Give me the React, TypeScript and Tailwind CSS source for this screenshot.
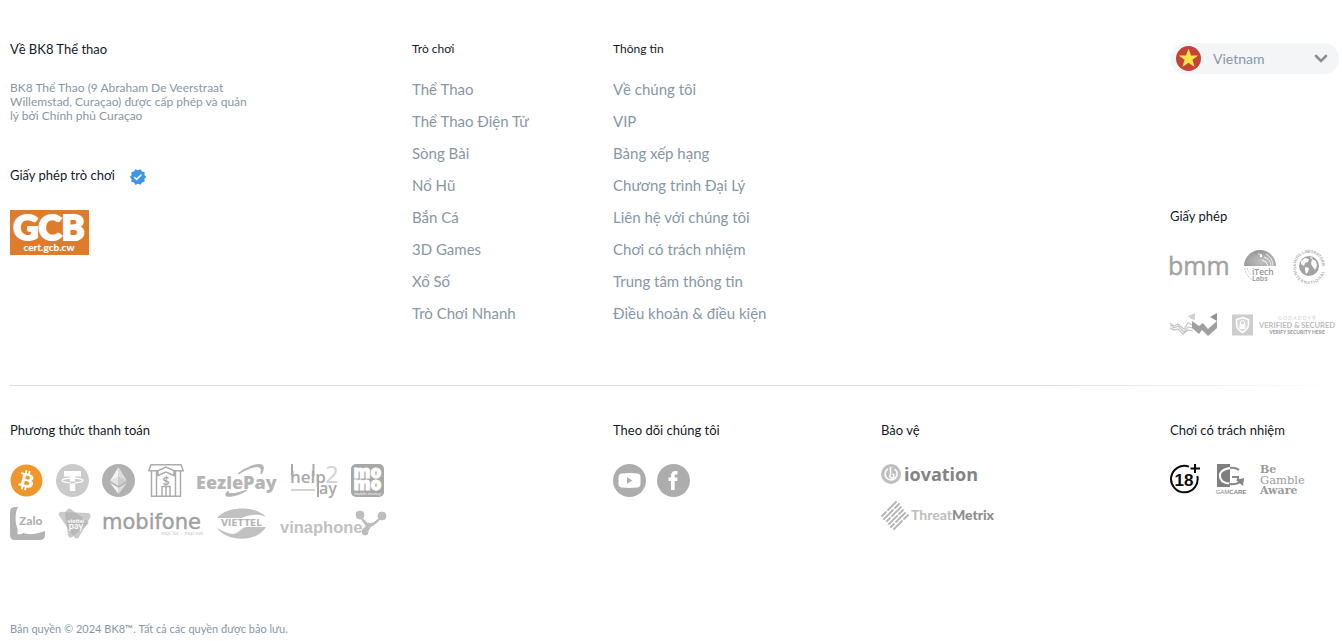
import { ReactNode } from "react";
import { FaBitcoin } from "react-icons/fa";
import { MdVerified } from "react-icons/md";

const games = [
  "Thể Thao",
  "Thể Thao Điện Tử",
  "Sòng Bài",
  "Nổ Hũ",
  "Bắn Cá",
  "3D Games",
  "Xổ Số",
  "Trò Chơi Nhanh",
];

const info = [
  "Về chúng tôi",
  "VIP",
  "Bảng xếp hạng",
  "Chương trình Đại Lý",
  "Liên hệ với chúng tôi",
  "Chơi có trách nhiệm",
  "Trung tâm thông tin",
  "Điều khoản & điều kiện",
];

export default function App() {
  return (
    <footer className="bg-white pt-10 pl-2.5 font-['Lato','Open_Sans',sans-serif] text-[#8798a5]">
      <div className="grid grid-cols-[402fr_201fr_557fr_172fr]">
        <About />
        <LinkColumn title="Trò chơi" links={games} />
        <LinkColumn title="Thông tin" links={info} />
        <div>
          <LanguageSelect />
          <div className="mt-[133px]">
            <Heading>Giấy phép</Heading>
          </div>
          <Licences />
        </div>
      </div>

      <hr className="mt-12 h-px border-0 bg-linear-to-r from-[#dcdcdc] from-75% to-white" />

      <div className="mt-[35px] grid grid-cols-[603fr_268fr_289fr_172fr]">
        <div>
          <Heading>Phương thức thanh toán</Heading>
          <Payments />
        </div>
        <div>
          <Heading>Theo dõi chúng tôi</Heading>
          <div className="mt-[25px] flex gap-[11px]">
            <a href="#youtube" aria-label="YouTube">
              <YoutubeIcon />
            </a>
            <a href="#facebook" aria-label="Facebook">
              <FacebookIcon />
            </a>
          </div>
        </div>
        <div>
          <Heading>Bảo vệ</Heading>
          <div className="mt-[25px] flex flex-col gap-4">
            <Iovation />
            <ThreatMetrix />
          </div>
        </div>
        <div>
          <Heading>Chơi có trách nhiệm</Heading>
          <div className="mt-6 flex gap-4">
            <Eighteen />
            <GamCare />
            <GambleAware />
          </div>
        </div>
      </div>

      <p className="mt-[79px] text-[11px] leading-5">
        Bản quyền © 2024 BK8™. Tất cả các quyền được bảo lưu.
      </p>
    </footer>
  );
}

function Heading({ children }: { children: ReactNode }) {
  return <h2 className="text-[13px] leading-[18px] text-[#131a28]">{children}</h2>;
}

function About() {
  return (
    <div>
      <Heading>Về BK8 Thể thao</Heading>
      <p className="mt-[23px] max-w-[246px] text-xs leading-[14px]">
        BK8 Thể Thao (9 Abraham De Veerstraat Willemstad, Curaçao) được cấp phép
        và quản lý bởi Chính phủ Curaçao
      </p>
      <div className="mt-[43px] flex gap-3.5">
        <Heading>Giấy phép trò chơi</Heading>
        <MdVerified size={18} className="mt-0.5 text-[#3c95e8]" />
      </div>
      <svg width="79" height="45" className="mt-6 overflow-visible">
        <rect width="79" height="45" fill="#de7c2b" />
        <g fill="#fff" textAnchor="middle" fontWeight="900">
          <text x="39" y="30" fontSize="35" stroke="#fff" strokeWidth="2">
            GCB
          </text>
          <text x="39" y="41" fontSize="10">
            cert.gcb.cw
          </text>
        </g>
      </svg>
    </div>
  );
}

function LinkColumn({ title, links }: { title: string; links: string[] }) {
  return (
    <div>
      <h2 className="text-xs leading-[18px] text-[#131a28]">{title}</h2>
      <ul className="mt-[15px]">
        {links.map((link) => (
          <li key={link} className="text-[15px] leading-8">
            <a href="#">{link}</a>
          </li>
        ))}
      </ul>
    </div>
  );
}

function LanguageSelect() {
  return (
    <div className="relative mt-[3px] mr-[3px] flex h-[31px] items-center rounded-full bg-[#f3f5f7]">
      <svg width="25" height="25" viewBox="0 0 25 25" className="absolute left-1.5">
        <circle cx="12.5" cy="12.5" r="12.5" fill="#c44336" />
        <path
          d="M12.5 2.500 15 9.400h7.300l-5.800 4.400 2.100 7.200-6.100-4.300L6.400 21l2.100-7.200L2.700 9.400H10z"
          fill="#f9e34c"
        />
      </svg>
      <select
        aria-label="Quốc gia"
        className="h-full w-full appearance-none bg-transparent pl-[43px] text-sm outline-none"
      >
        <option>Vietnam</option>
      </select>
      <svg
        width="14"
        height="10"
        className="pointer-events-none absolute right-[11px]"
        fill="none"
        stroke="#8e8e8e"
        strokeWidth="2.600"
      >
        <path d="M2 2l5 5 5-5" strokeLinecap="round" />
      </svg>
    </div>
  );
}

function Licences() {
  return (
    <>
      <div className="mt-[23px] flex h-[35px] items-center gap-4">
        <svg
          width="58"
          height="20"
          aria-label="bmm"
          role="img"
          className="overflow-visible"
        >
          <text
            x="-2"
            y="19"
            fontSize="25"
            fill="#a3a3a3"
            stroke="#a3a3a3"
            strokeWidth="0.500"
            className="font-['Open_Sans']"
          >
            bmm
          </text>
        </svg>
        <ITechLabs />
        <Gli />
      </div>
      <div className="mt-[30px] flex items-center gap-[15px]">
        <svg width="47" height="24" viewBox="0 0 47 24">
          <path
            d="M0 10l4 3 4-2 6 5 4-6 4 2M0 12l4 3 4-2 6 6 4-5 5 1M0 15l4 2 4-1 5 5 5-4 5 1"
            fill="none"
            stroke="#c6c6c6"
            strokeWidth="1.200"
          />
          <path d="M22 8l7 5 4-3 5 6 9-8v7l-9 8-6-6-3 4-7-6z" fill="#a0a0a0" />
          <path d="M18 3l7-3v7l-4-1z" fill="#d3d3d3" />
          <path d="M40 4l7-4v8z" fill="#929292" />
        </svg>
        <svg width="104" height="22" viewBox="0 0 104 22">
          <rect width="21" height="21" y="0.500" fill="#cdcdcd" />
          <path
            d="M10.500 3.500l6 2v5c0 4-2.500 6-6 8-3.500-2-6-4-6-8v-5z"
            fill="#d7d7d7"
            stroke="#fff"
            strokeWidth="1.500"
          />
          <rect x="7.500" y="10" width="6" height="5" rx="1" fill="#fff" />
          <path d="M8.500 10V8.500a2 2 0 0 1 4 0V10" fill="none" stroke="#fff" />
          <g textAnchor="middle">
            <text x="65" y="6" fontSize="5" fill="#cfcfcf">
              G O D A D D Y ®
            </text>
            <text x="65" y="14" fontSize="7.500" fontWeight="700" fill="#bcbcbc">
              VERIFIED &amp; SECURED
            </text>
            <text x="65" y="20" fontSize="5" fontWeight="900" fill="#9f9f9f">
              VERIFY SECURITY HERE
            </text>
          </g>
        </svg>
      </div>
    </>
  );
}

function ITechLabs() {
  return (
    <svg width="32" height="32" viewBox="0 0 32 32" className="overflow-visible">
      <defs>
        <radialGradient id="dome" cx="0.600" cy="0.700" r="0.800">
          <stop offset="0" stopColor="#c4c4c4" />
          <stop offset="1" stopColor="#8f8f8f" />
        </radialGradient>
      </defs>
      <path d="M0 16a16 16 0 0 1 32 0z" fill="url(#dome)" />
      <g fill="none" stroke="#fff">
        <path d="M18 10q5 1 6 6M20 7q7 2 7 9M22 4q7 4 7 12" strokeWidth="0.800" />
        <path d="M14 4l4 1" strokeWidth="0.800" />
      </g>
      <circle cx="17" cy="6" r="1.200" fill="#fff" />
      <path
        d="M.7 18q1 8 8 12M3 18q1 4 5 7"
        fill="none"
        stroke="#cfcfcf"
        strokeDasharray="2 1"
      />
      <g fill="#939393" fontWeight="600" className="font-['Open_Sans']">
        <text x="8" y="25" fontSize="8.500">
          iTech
        </text>
        <text x="8" y="31" fontSize="7">
          Labs
        </text>
      </g>
    </svg>
  );
}

function Gli() {
  return (
    <svg width="34" height="34" viewBox="0 0 34 34" className="overflow-visible">
      <defs>
        <path id="gli-top" d="M4.500 20.500a13 13 0 1 1 25.300-2" />
        <path id="gli-bottom" d="M1 19a16 16 0 0 0 32 0" />
      </defs>
      <circle cx="17" cy="17" r="10" fill="#a3a3a3" />
      <path
        d="M9 12l4-3 4 1-1 3-3 1-1 3-3-2zM13 18l4 1-1 4-2 2-1-4zM20 10l4 2 1 5-2 4-2-3-2-3zM18 8l3 1-2 1z"
        fill="#fff"
      />
      <g fontSize="4" fontWeight="700" fill="#a6a6a6">
        <text>
          <textPath href="#gli-top">GAMING LABORATORIES</textPath>
        </text>
        <text>
          <textPath href="#gli-bottom" startOffset="3">
            I N T E R N A T I O N A L
          </textPath>
        </text>
      </g>
    </svg>
  );
}

function Payments() {
  return (
    <div className="mt-[25px] flex max-w-[402px] flex-wrap gap-x-[13px] gap-y-2.5">
      <FaBitcoin size={33} className="text-[#f0972c]" />
      <svg width="33" height="33" viewBox="0 0 33 33">
        <circle cx="16.500" cy="16.500" r="16.500" fill="#cbcbcb" />
        <path d="M8 7h17v5.500h-5.800V27h-5.400V12.500H8z" fill="#fff" />
        <ellipse
          cx="16.500"
          cy="16.500"
          rx="10.500"
          ry="2.300"
          fill="none"
          stroke="#fff"
          strokeWidth="1.200"
        />
        <path d="M13.800 17.500h5.400v1.800h-5.400z" fill="#cbcbcb" />
      </svg>
      <svg width="33" height="33" viewBox="0 0 33 33">
        <circle cx="16.500" cy="16.500" r="16.500" fill="#b1b1b1" />
        <path d="M16.500 3L8 17l8.500-4z" fill="#f4f4f4" />
        <path d="M16.500 3L25 17l-8.500-4z" fill="#dedede" />
        <path d="M8 17l8.500-4v9z" fill="#e4e4e4" />
        <path d="M25 17l-8.500-4v9z" fill="#cccccc" />
        <path d="M8 18.800l8.500 5V30z" fill="#f4f4f4" />
        <path d="M25 18.800l-8.500 5V30z" fill="#dcdcdc" />
      </svg>
      <svg
        width="36"
        height="33"
        viewBox="0 0 36 33"
        fill="none"
        stroke="#adadad"
        strokeWidth="1.500"
      >
        <path d="M3 .8h30l2.200 6H26L18 3l-8 3.800H.8z" />
        <path d="M3.500 7v25.200h29V7M8.500 7v25M27.500 7v25M10 7v4.500L18 8l8 3.500V7" />
        <path d="M14 32v-9.500h8V32M18 22.500V32" />
        <text
          x="18"
          y="20.500"
          fontSize="12"
          fontWeight="700"
          textAnchor="middle"
          fill="#a5a5a5"
          stroke="none"
        >
          $
        </text>
      </svg>
      <svg width="82" height="33" viewBox="0 0 82 33" className="-mr-px overflow-visible">
        <path
          d="M41 10C50 3 61-1 65 1.500c2 1.500 1 5-1 8.500 1-4 1-6-1-7-4-2-13 1-22 7z"
          fill="#b5b5b5"
          stroke="#b5b5b5"
          strokeWidth="1.500"
        />
        <path
          d="M31 27c-4 4-3 6 4 5 6-1 11-3 15-6-8 3-19 6-19 1z"
          fill="#b5b5b5"
          stroke="#b5b5b5"
        />
        <text
          x="-1"
          y="25"
          fontSize="18"
          fontWeight="800"
          fill="#b5b5b5"
          className="font-['Open_Sans']"
        >
          EeziePay
        </text>
      </svg>
      <svg
        width="47"
        height="33"
        viewBox="0 0 47 33"
        className="overflow-visible font-['Open_Sans']"
      >
        <g fill="#a9a9a9">
          <path d="M0 0h2v12H0zM21.500 0h2v12h-2zM26 12h2v21h-2zM0 25.500h24v1H0z" />
          <text x="-1" y="19" fontSize="17" fontWeight="600">
            help
          </text>
          <text x="28" y="30" fontSize="16" fontWeight="600">
            ay
          </text>
        </g>
        <text x="34" y="19" fontSize="24" fill="#d4d4d4">
          2
        </text>
      </svg>
      <svg width="33" height="33" viewBox="0 0 33 33" className="font-['Open_Sans']">
        <rect width="33" height="33" rx="5" fill="#a8a8a8" />
        <g fill="#fff" textAnchor="middle">
          <g fontSize="17" fontWeight="800" stroke="#fff">
            <text x="16.500" y="14">
              mo
            </text>
            <text x="16.500" y="26">
              mo
            </text>
          </g>
          <text x="16.500" y="31" fontSize="4">
            mobile money
          </text>
        </g>
      </svg>
      <svg width="35" height="33" viewBox="0 0 35 33">
        <path
          d="M5 0h3C5 5 5 15 7 20c1 3 1 5 0 7q4 1 6-1 9 3 22-2v4q0 5-5 5H5q-5 0-5-5V5q0-5 5-5z"
          fill="#b3b3b3"
        />
        <text x="9" y="18" fontSize="12" fontWeight="900" fill="#b0b0b0">
          Zalo
        </text>
      </svg>
      <svg width="33" height="33" viewBox="0 0 33 33">
        <path d="M1 6q1-2 5-1l24 1q4 1 2 5L21 30q-2 3-5 0L2 10q-2-2-1-4z" fill="#cacaca" />
        <path
          d="M9 3q2-3 5 0l15 11q3 2 0 4L14 30q-3 2-4-2L7 7q0-3 2-4z"
          fill="#b0b0b0"
          fillOpacity="0.700"
        />
        <g fill="#fff" textAnchor="middle" fontWeight="700">
          <text x="18" y="16" fontSize="6">
            viettel
          </text>
          <text x="18" y="22" fontSize="9">
            pay
          </text>
        </g>
      </svg>
      <svg
        width="99"
        height="33"
        viewBox="0 0 99 33"
        className="overflow-visible font-['DejaVu_Sans']"
      >
        <text x="-2" y="22" fontSize="21" fill="#a0a0a0" stroke="#a0a0a0" strokeWidth="0.400">
          mobifone
        </text>
        <text x="99" y="28" fontSize="5" textAnchor="end" fill="#bcbcbc">
          mọi lúc - mọi nơi
        </text>
      </svg>
      <svg width="51" height="33" viewBox="0 0 51 33">
        <path d="M1 11C10-1 40-2 50 10c-8-4-17-2-22 0-2 1-4 1-7 1z" fill="#c1c1c1" />
        <path d="M1 21c10 14 40 15 49-1H31c-7 0-8 10-19 6-4-1-7-3-11-5z" fill="#c1c1c1" />
        <text
          x="25.500"
          y="19"
          fontSize="9"
          fontWeight="700"
          textAnchor="middle"
          fill="#b4b4b4"
          className="font-['DejaVu_Sans']"
        >
          VIETTEL
        </text>
      </svg>
      <svg width="107" height="33" viewBox="0 0 107 33">
        <text
          x="0"
          y="26"
          fontSize="16.500"
          fontWeight="700"
          fill="#c1c1c1"
          className="font-['Liberation_Sans']"
        >
          vinaphone
        </text>
        <g fill="#bdbdbd" stroke="#bdbdbd">
          <circle cx="80" cy="8" r="4" />
          <circle cx="102" cy="9" r="4" />
          <circle cx="85" cy="25" r="3" />
          <path d="M81 11q4 2 6 5 4 2 8-1 2-3 5-3-2 3-5 5-5 2-6 5-1 4-4 4l-2-4q4-2 3-4-3-2-5-7z" />
        </g>
      </svg>
    </div>
  );
}

function YoutubeIcon() {
  return (
    <svg width="33" height="33" viewBox="0 0 33 33">
      <circle cx="16.500" cy="16.500" r="16.500" fill="#adadad" />
      <path
        d="M9 9.500q7.500-.8 15 0 3.500.2 3.500 3.500v7q0 3.300-3.500 3.500-7.500.8-15 0-3.500-.2-3.500-3.500v-7q0-3.300 3.500-3.500z"
        fill="#fff"
      />
      <path d="M14 13.300v6.400l5.500-3.200z" fill="#adadad" />
    </svg>
  );
}

function FacebookIcon() {
  return (
    <svg width="33" height="33" viewBox="0 0 33 33">
      <circle cx="16.500" cy="16.500" r="16.500" fill="#adadad" />
      <path
        d="M14 26v-9h-2.500v-3.500H14v-2c0-3 1.700-4.500 4.300-4.500h2.200v3.500H19c-1 0-1.300.5-1.300 1.400v1.600h2.900l-.5 3.500h-2.400v9z"
        fill="#fff"
      />
    </svg>
  );
}

function Iovation() {
  return (
    <svg width="99" height="21" viewBox="0 0 99 21">
      <circle cx="10" cy="10" r="10" fill="#c0c0c0" />
      <path
        d="M7 4.800a6 6 0 1 0 6.500.2M9.500 3v7.500a2 2 0 1 0 2-.5"
        fill="none"
        stroke="#fff"
        strokeWidth="1.500"
      />
      <text
        x="23"
        y="17"
        fontSize="18"
        fontWeight="700"
        fill="#848484"
        className="font-['Open_Sans']"
      >
        iovation
      </text>
    </svg>
  );
}

function ThreatMetrix() {
  return (
    <svg width="113" height="30" viewBox="0 0 113 30">
      <path
        d="M1 15l4-4M7 9l8-8M3 18l9-9M14 7l4-4M6 20l3-3M11 15l9-9M8 23l8-8M18 13l4-4M10 26l3-3M15 21l9-9M13 28l8-8M23 18l4-4"
        stroke="#b4b4b4"
        strokeWidth="1.800"
        strokeLinecap="round"
      />
      <text x="30" y="19" fontSize="14" fontWeight="700" fill="#bdbdbd">
        Threat
        <tspan fontWeight="900" fill="#8d8d8d">
          Metrix
        </tspan>
      </text>
    </svg>
  );
}

function Eighteen() {
  return (
    <svg width="31" height="32" viewBox="0 0 31 32">
      <path
        d="M19 3.600A13.300 13.300 0 1 0 27.300 13"
        fill="none"
        stroke="#0b0b0b"
        strokeWidth="2"
      />
      <path d="M25 1v9M20.500 5.500h9.500" stroke="#0b0b0b" strokeWidth="2" />
      <text
        x="14"
        y="23"
        fontSize="17"
        fontWeight="700"
        textAnchor="middle"
        fill="#0b0b0b"
        className="font-['Liberation_Sans']"
      >
        18
      </text>
    </svg>
  );
}

function GamCare() {
  return (
    <svg width="28" height="32" viewBox="0 0 28 32" className="overflow-visible">
      <path d="M0 1h13v23H0z" fill="#7f7f7f" />
      <path
        d="M21 6.500C12 3 2 7 3 13.500c1 7 10 9 18 5"
        fill="none"
        stroke="#fff"
        strokeWidth="2"
      />
      <path
        d="M13 5q5-1 9 2M12 21q8 1 12-3M15 14h6v4"
        fill="none"
        stroke="#8a8a8a"
        strokeWidth="2.200"
      />
      <path d="M19 17l8-2-1 8z" fill="#858585" />
      <text
        x="14"
        y="31"
        fontSize="6"
        textAnchor="middle"
        fill="#858585"
        className="font-['Liberation_Sans']"
      >
        GAM
        <tspan fontWeight="700">CARE</tspan>
      </text>
    </svg>
  );
}

function GambleAware() {
  return (
    <svg width="46" height="32" viewBox="0 0 46 32" className="overflow-visible">
      <g fill="#9b9b9b" className="font-['DejaVu_Serif']">
        <text x="-1" y="10" fontSize="11" fontWeight="700">
          Be
        </text>
        <text x="-1" y="21" fontSize="11.500">
          Gamble
        </text>
        <text x="-1" y="31" fontSize="11" fontWeight="700">
          Aware
        </text>
      </g>
    </svg>
  );
}
